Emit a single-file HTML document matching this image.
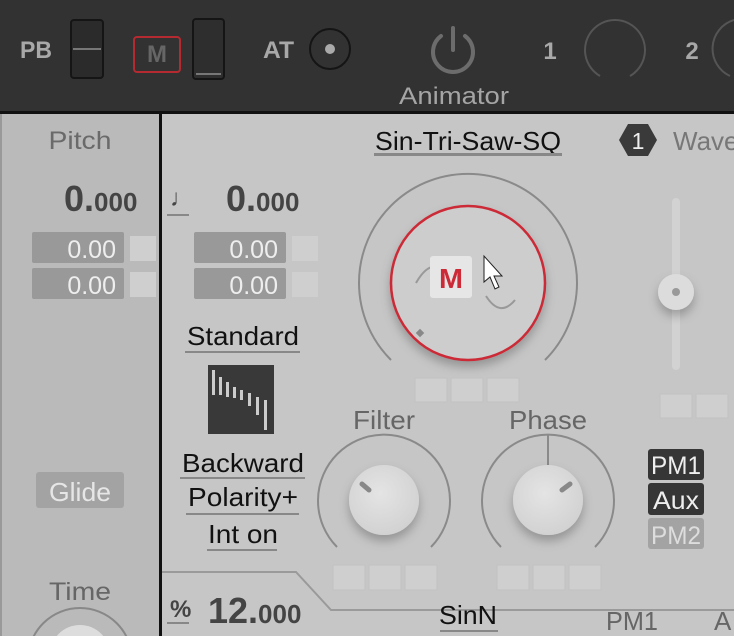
<!DOCTYPE html>
<html><head><meta charset="utf-8"><style>
html,body{margin:0;padding:0;width:734px;height:636px;overflow:hidden;background:#c6c6c6}
svg{display:block}
text{font-family:"Liberation Sans Narrow","Liberation Sans",sans-serif}
</style></head><body>
<svg width="734" height="636" viewBox="0 0 734 636" xmlns="http://www.w3.org/2000/svg">
<defs>
<radialGradient id="kn" cx="45%" cy="40%" r="60%"><stop offset="0" stop-color="#e4e4e4"/><stop offset="1" stop-color="#d2d2d2"/></radialGradient>
<filter id="sh" x="-30%" y="-30%" width="160%" height="170%"><feDropShadow dx="0" dy="6" stdDeviation="5" flood-color="#000" flood-opacity="0.25"/></filter>
</defs>
<!-- top bar -->
<rect x="0" y="0" width="734" height="112" fill="#323232"/>
<rect x="0" y="111" width="734" height="3" fill="#111"/>
<text x="20" y="58" font-size="24" font-weight="bold" fill="#a8a8a8" textLength="32" lengthAdjust="spacingAndGlyphs">PB</text>
<rect x="71" y="20" width="32" height="58" rx="3" fill="#2b2b2b" stroke="#151515" stroke-width="2"/>
<rect x="73" y="48" width="28" height="2" fill="#777"/>
<rect x="134" y="37" width="46" height="35" rx="3" fill="none" stroke="#b52a30" stroke-width="2"/>
<text x="157" y="62" font-size="24" font-weight="bold" fill="#666" text-anchor="middle" textLength="20" lengthAdjust="spacingAndGlyphs">M</text>
<rect x="193" y="19" width="31" height="60" rx="3" fill="#2e2e2e" stroke="#151515" stroke-width="2"/>
<rect x="196" y="73" width="25" height="2" fill="#777"/>
<text x="263" y="58" font-size="24" font-weight="bold" fill="#a8a8a8" textLength="31" lengthAdjust="spacingAndGlyphs">AT</text>
<circle cx="330" cy="49" r="20" fill="none" stroke="#151515" stroke-width="2"/>
<circle cx="330" cy="49" r="5" fill="#aaa"/>
<path d="M441 36 A20 20 0 1 0 465 36" fill="none" stroke="#6c6c6c" stroke-width="4" stroke-linecap="round"/>
<line x1="453" y1="28" x2="453" y2="50" stroke="#6c6c6c" stroke-width="4" stroke-linecap="round"/>
<text x="454" y="104" font-size="24" fill="#a5a5a5" text-anchor="middle" textLength="110" lengthAdjust="spacingAndGlyphs">Animator</text>
<text x="550" y="59" font-size="24" font-weight="bold" fill="#a8a8a8" text-anchor="middle">1</text>
<path d="M600 76 A30 30 0 1 1 630 76" fill="none" stroke="#555" stroke-width="2"/>
<text x="692" y="59" font-size="24" font-weight="bold" fill="#a8a8a8" text-anchor="middle">2</text>
<path d="M734 20 A30 30 0 0 0 730 76" fill="none" stroke="#555" stroke-width="2"/>
<!-- left panel -->
<rect x="0" y="114" width="160" height="522" fill="#bababa"/>
<rect x="0" y="114" width="2" height="522" fill="#999"/>
<rect x="159" y="114" width="3" height="522" fill="#111"/>
<text x="80" y="149" font-size="25" fill="#6a6a6a" text-anchor="middle" textLength="63" lengthAdjust="spacingAndGlyphs">Pitch</text>
<text x="64" y="211" font-size="36" font-weight="bold" fill="#444">0.<tspan font-size="26">000</tspan></text>
<rect x="32" y="232" width="92" height="31" rx="2" fill="#999"/>
<text x="116" y="258" font-size="25" fill="#eee" text-anchor="end">0.00</text>
<rect x="130" y="236" width="26" height="25" fill="#cfcfcf"/>
<rect x="32" y="268" width="92" height="31" rx="2" fill="#999"/>
<text x="116" y="294" font-size="25" fill="#eee" text-anchor="end">0.00</text>
<rect x="130" y="272" width="26" height="25" fill="#cfcfcf"/>
<rect x="36" y="472" width="88" height="36" rx="3" fill="#a3a3a3"/>
<text x="80" y="501" font-size="26" fill="#e6e6e6" text-anchor="middle" textLength="62" lengthAdjust="spacingAndGlyphs">Glide</text>
<text x="80" y="600" font-size="25" fill="#666" text-anchor="middle" textLength="62" lengthAdjust="spacingAndGlyphs">Time</text>
<circle cx="80" cy="660" r="52" fill="none" stroke="#888" stroke-width="2"/>
<circle cx="80" cy="655" r="30" fill="#ddd"/>
<!-- main panel -->
<text x="170" y="206" font-size="24" font-weight="bold" fill="#444">♩</text>
<rect x="167" y="214" width="22" height="2" fill="#888"/>
<text x="226" y="211" font-size="36" font-weight="bold" fill="#444">0.<tspan font-size="26">000</tspan></text>
<rect x="194" y="232" width="92" height="31" rx="2" fill="#999"/>
<text x="278" y="258" font-size="25" fill="#eee" text-anchor="end">0.00</text>
<rect x="292" y="236" width="26" height="25" fill="#cfcfcf"/>
<rect x="194" y="268" width="92" height="31" rx="2" fill="#999"/>
<text x="278" y="294" font-size="25" fill="#eee" text-anchor="end">0.00</text>
<rect x="292" y="272" width="26" height="25" fill="#cfcfcf"/>
<text x="468" y="150" font-size="26" fill="#111" text-anchor="middle" textLength="186" lengthAdjust="spacingAndGlyphs">Sin-Tri-Saw-SQ</text>
<rect x="374" y="153" width="188" height="3" fill="#888"/>
<polygon points="628,124 648,124 657,140 648,156 628,156 619,140" fill="#3a3a3a"/>
<text x="638" y="149" font-size="23" fill="#eee" text-anchor="middle">1</text>
<text x="673" y="150" font-size="26" fill="#777">Wave</text>
<!-- main knob -->
<path d="M391 360 A109 109 0 1 1 545 360" fill="none" stroke="#8a8a8a" stroke-width="2"/>
<circle cx="468" cy="283" r="78" fill="#cdcdcd" filter="url(#sh)"/>
<circle cx="468" cy="283" r="77" fill="none" stroke="#cc2a36" stroke-width="2.5"/>
<path d="M416 283 Q428 262 440 268 M486 296 Q500 318 515 300" fill="none" stroke="#999" stroke-width="2"/>
<rect x="417" y="330" width="6" height="6" fill="#888" transform="rotate(45 420 333)"/>
<rect x="430" y="256" width="42" height="42" rx="3" fill="#e6e6e6"/>
<text x="451" y="288" font-size="28" font-weight="bold" fill="#cc2a36" text-anchor="middle" textLength="24" lengthAdjust="spacingAndGlyphs">M</text>
<path d="M484 256 L484 282 L490 277 L495 289 L499 287 L494 276 L502 276 Z" fill="#fff" stroke="#222" stroke-width="1"/>
<rect x="415" y="378" width="32" height="24" fill="#cfcfcf" stroke="#c2c2c2"/>
<rect x="451" y="378" width="32" height="24" fill="#cfcfcf" stroke="#c2c2c2"/>
<rect x="487" y="378" width="32" height="24" fill="#cfcfcf" stroke="#c2c2c2"/>
<!-- vertical slider -->
<rect x="672" y="198" width="8" height="172" rx="4" fill="#d2d2d2"/>
<circle cx="676" cy="292" r="18" fill="#dcdcdc" filter="url(#sh)"/>
<circle cx="676" cy="292" r="4" fill="#999"/>
<rect x="660" y="394" width="32" height="24" fill="#cfcfcf" stroke="#c2c2c2"/>
<rect x="696" y="394" width="32" height="24" fill="#cfcfcf" stroke="#c2c2c2"/>
<!-- left column of main -->
<text x="243" y="345" font-size="26" fill="#111" text-anchor="middle" textLength="112" lengthAdjust="spacingAndGlyphs">Standard</text>
<rect x="185" y="351" width="115" height="2" fill="#888"/>
<rect x="208" y="365" width="66" height="69" fill="#393939"/>
<g fill="#ccc"><rect x="212" y="370" width="3" height="25"/><rect x="219" y="377" width="3" height="18"/><rect x="226" y="382" width="3" height="15"/><rect x="233" y="387" width="3" height="11"/><rect x="240" y="390" width="3" height="10"/><rect x="248" y="393" width="3" height="13"/><rect x="256" y="397" width="3" height="18"/><rect x="264" y="400" width="3" height="30"/></g>
<text x="243" y="472" font-size="26" fill="#111" text-anchor="middle" textLength="122" lengthAdjust="spacingAndGlyphs">Backward</text>
<rect x="180" y="477" width="125" height="2" fill="#888"/>
<text x="243" y="506" font-size="26" fill="#111" text-anchor="middle" textLength="110" lengthAdjust="spacingAndGlyphs">Polarity+</text>
<rect x="186" y="513" width="113" height="2" fill="#888"/>
<text x="243" y="543" font-size="26" fill="#111" text-anchor="middle" textLength="70" lengthAdjust="spacingAndGlyphs">Int on</text>
<rect x="207" y="549" width="70" height="2" fill="#888"/>
<!-- Filter -->
<text x="384" y="429" font-size="26" fill="#666" text-anchor="middle" textLength="62" lengthAdjust="spacingAndGlyphs">Filter</text>
<path d="M337 547 A66 66 0 1 1 431 547" fill="none" stroke="#8a8a8a" stroke-width="2"/>
<circle cx="384" cy="500" r="35" fill="url(#kn)" filter="url(#sh)"/>
<line x1="362" y1="484" x2="369" y2="490" stroke="#888" stroke-width="5" stroke-linecap="round"/>
<rect x="333" y="565" width="32" height="25" fill="#cfcfcf" stroke="#c2c2c2"/>
<rect x="369" y="565" width="32" height="25" fill="#cfcfcf" stroke="#c2c2c2"/>
<rect x="405" y="565" width="32" height="25" fill="#cfcfcf" stroke="#c2c2c2"/>
<!-- Phase -->
<text x="548" y="429" font-size="26" fill="#666" text-anchor="middle" textLength="78" lengthAdjust="spacingAndGlyphs">Phase</text>
<path d="M501 547 A66 66 0 1 1 595 547" fill="none" stroke="#8a8a8a" stroke-width="2"/>
<line x1="548" y1="434" x2="548" y2="468" stroke="#8a8a8a" stroke-width="2"/>
<circle cx="548" cy="500" r="35" fill="url(#kn)" filter="url(#sh)"/>
<line x1="562" y1="490" x2="570" y2="484" stroke="#888" stroke-width="5" stroke-linecap="round"/>
<rect x="497" y="565" width="32" height="25" fill="#cfcfcf" stroke="#c2c2c2"/>
<rect x="533" y="565" width="32" height="25" fill="#cfcfcf" stroke="#c2c2c2"/>
<rect x="569" y="565" width="32" height="25" fill="#cfcfcf" stroke="#c2c2c2"/>
<!-- PM buttons -->
<rect x="648" y="449" width="56" height="31" rx="3" fill="#363636"/>
<text x="676" y="474" font-size="25" fill="#eee" text-anchor="middle" textLength="50" lengthAdjust="spacingAndGlyphs">PM1</text>
<rect x="648" y="483" width="56" height="32" rx="3" fill="#363636"/>
<text x="676" y="509" font-size="25" fill="#eee" text-anchor="middle" textLength="46" lengthAdjust="spacingAndGlyphs">Aux</text>
<rect x="648" y="518" width="56" height="31" rx="3" fill="#a3a3a3"/>
<text x="676" y="544" font-size="25" fill="#ddd" text-anchor="middle" textLength="50" lengthAdjust="spacingAndGlyphs">PM2</text>
<!-- bottom section -->
<path d="M162 572 L296 572 L331 610 L734 610" fill="none" stroke="#9a9a9a" stroke-width="2"/>
<text x="170" y="617" font-size="24" font-weight="bold" fill="#444">%</text>
<rect x="167" y="622" width="22" height="2" fill="#888"/>
<text x="208" y="623" font-size="36" font-weight="bold" fill="#444">12.<tspan font-size="26">000</tspan></text>
<text x="468" y="624" font-size="26" fill="#111" text-anchor="middle" textLength="58" lengthAdjust="spacingAndGlyphs">SinN</text>
<rect x="440" y="630" width="58" height="2" fill="#888"/>
<text x="632" y="630" font-size="26" fill="#666" text-anchor="middle" textLength="52" lengthAdjust="spacingAndGlyphs">PM1</text>
<text x="714" y="630" font-size="26" fill="#666">A</text>
</svg>
</body></html>
